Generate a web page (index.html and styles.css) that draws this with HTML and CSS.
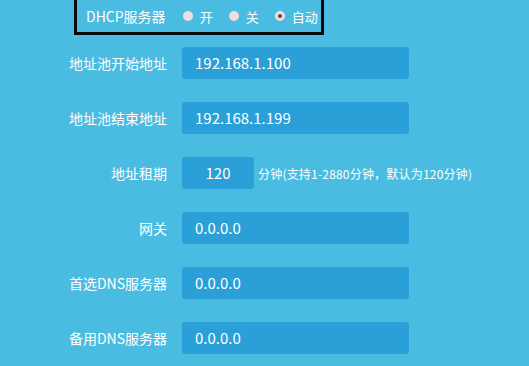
FILE: index.html
```html
<!DOCTYPE html>
<html lang="zh-CN">
<head>
    <meta charset="UTF-8">
    <title>DHCP服务器</title>
    <link rel="stylesheet" href="styles.css">
</head>
<body>
    <div class="dhcp-switch">
        <span class="switch-title">DHCP服务器</span>
        <label class="radio"><span class="dot"></span>开</label>
        <label class="radio"><span class="dot"></span>关</label>
        <label class="radio"><span class="dot checked"></span>自动</label>
    </div>

    <div class="dhcp-form">
        <div class="form-row">
            <span class="row-label">地址池开始地址</span>
            <div class="text-box">192.168.1.100</div>
        </div>
        <div class="form-row">
            <span class="row-label">地址池结束地址</span>
            <div class="text-box">192.168.1.199</div>
        </div>
        <div class="form-row">
            <span class="row-label">地址租期</span>
            <div class="text-box short">120</div>
            <span class="hint">分钟(支持1-2880分钟，默认为120分钟)</span>
        </div>
        <div class="form-row">
            <span class="row-label">网关</span>
            <div class="text-box">0.0.0.0</div>
        </div>
        <div class="form-row">
            <span class="row-label">首选DNS服务器</span>
            <div class="text-box">0.0.0.0</div>
        </div>
        <div class="form-row">
            <span class="row-label">备用DNS服务器</span>
            <div class="text-box">0.0.0.0</div>
        </div>
    </div>
</body>
</html>
```

FILE: styles.css
```css
body {
    margin: 0;
    background-color: #4abce1;
    color: #fff;
    font-family: "Noto Sans CJK SC", "Noto Sans", sans-serif;
    font-size: 14px;
    overflow: hidden;
}
.dhcp-switch {
    display: flex;
    align-items: center;
    width: 250px;
    height: 35px;
    margin-left: 74px;
    padding-left: 9px;
    box-sizing: border-box;
    border: 3px solid #0a0a0a;
    border-top: none;
    white-space: nowrap;
}
.switch-title {
    flex-shrink: 0;
    margin-right: 17px;
}
.radio {
    display: flex;
    flex-shrink: 0;
    align-items: center;
    font-size: 13px;
    margin-right: 16px;
}
.radio:last-child {
    margin-right: 0;
}
.dot {
    flex-shrink: 0;
    width: 10px;
    height: 10px;
    border-radius: 50%;
    background-color: #f1dddd;
    margin-right: 7px;
    box-sizing: border-box;
}
.dot.checked {
    border: 3px solid #f1dddd;
    background-color: #5e4646;
}
.dhcp-form {
    padding-top: 12px;
}
.form-row {
    display: flex;
    align-items: center;
    height: 32px;
    margin-bottom: 23px;
    white-space: nowrap;
}
.row-label {
    width: 167px;
    margin-right: 15px;
    text-align: right;
}
.text-box {
    width: 227px;
    height: 32px;
    line-height: 32px;
    padding-left: 13px;
    box-sizing: border-box;
    border-radius: 3px;
    background-color: #2a9fd8;
    font-size: 15px;
}
.text-box.short {
    width: 72px;
    padding-left: 0;
    text-align: center;
}
.hint {
    margin-left: 4px;
    font-size: 12px;
    letter-spacing: 0.2px;
}
```
